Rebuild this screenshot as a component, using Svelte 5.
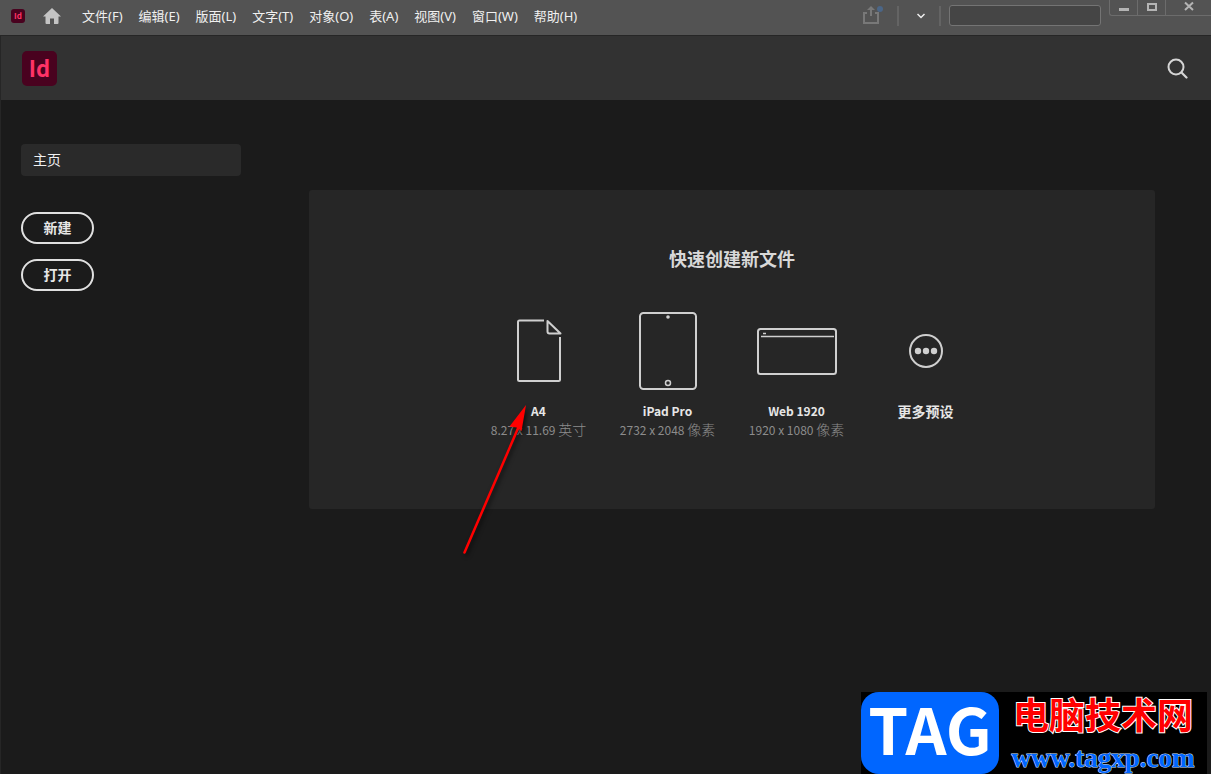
<script lang="ts">
    const menus = [
        "文件(F)",
        "编辑(E)",
        "版面(L)",
        "文字(T)",
        "对象(O)",
        "表(A)",
        "视图(V)",
        "窗口(W)",
        "帮助(H)",
    ];

    const presets = [
        { icon: "page", name: "A4", size: "8.27 x 11.69", unit: "英寸" },
        { icon: "tablet", name: "iPad Pro", size: "2732 x 2048", unit: "像素" },
        { icon: "browser", name: "Web 1920", size: "1920 x 1080", unit: "像素" },
        { icon: "more", name: "更多预设", size: "", unit: "" },
    ];

    let query = $state("");
</script>

<div class="app">
    <div class="menubar">
        <span class="badge">Id</span>
        <button class="home" aria-label="主页">
            <svg width="18" height="16" viewBox="0 0 18 16">
                <path d="M9 0 L18 8.6 H15.5 V15 Q15.5 16 14.5 16 H11 V10.5 H7 V16 H3.5 Q2.5 16 2.5 15 V8.6 H0 Z" fill="#c4c4c4" />
            </svg>
        </button>
        <nav class="menus">
            {#each menus as menu}
                <button>{menu}</button>
            {/each}
        </nav>
        <div class="tools">
            <button class="share" aria-label="共享">
                <svg width="22" height="20" viewBox="0 0 22 20">
                    <path d="M5 7 H2 V17 H16 V7 H13" fill="none" stroke="#787878" stroke-width="2" />
                    <path d="M9 10 V3" stroke="#787878" stroke-width="2" />
                    <path d="M9 0 L13 4 H5 Z" fill="#787878" />
                    <circle cx="18" cy="3" r="3" fill="#4b6687" />
                </svg>
            </button>
            <button class="chevron" aria-label="工作区">
                <svg width="8" height="6" viewBox="0 0 8 6">
                    <path d="M0.5 1 L4 4.5 L7.5 1" fill="none" stroke="#f0f0f0" stroke-width="1.5" />
                </svg>
            </button>
            <input type="text" aria-label="搜索帮助" bind:value={query} />
            <div class="window">
                <button aria-label="最小化">
                    <svg width="10" height="12" viewBox="0 0 10 12"><path d="M0 8 H10 V11 H0 Z" fill="#b4b4b4" /></svg>
                </button>
                <button aria-label="最大化">
                    <svg width="10" height="12" viewBox="0 0 10 12"><path d="M1 4 H9 V10 H1 Z" fill="none" stroke="#b4b4b4" stroke-width="2" /></svg>
                </button>
                <button class="close" aria-label="关闭">
                    <svg width="10" height="12" viewBox="0 0 10 12"><path d="M1 2.5 L9 10 M9 2.5 L1 10" stroke="#b4b4b4" stroke-width="2" /></svg>
                </button>
            </div>
        </div>
    </div>

    <header>
        <span class="logo">Id</span>
        <button aria-label="搜索">
            <svg width="22" height="22" viewBox="0 0 22 22">
                <circle cx="9" cy="10" r="7.5" fill="none" stroke="#d5d5d5" stroke-width="2" />
                <path d="M14.5 15.5 L19.5 20.5" stroke="#d5d5d5" stroke-width="2.2" stroke-linecap="round" />
            </svg>
        </button>
    </header>

    <div class="body">
        <aside>
            <a href="#home">主页</a>
            <button>新建</button>
            <button>打开</button>
        </aside>

        <main>
            <h1>快速创建新文件</h1>
            <div class="presets">
                {#each presets as preset}
                    <button class="preset">
                        <span class="icon">
                            {#if preset.icon === "page"}
                                <svg width="46" height="64" viewBox="0 0 46 64">
                                    <path d="M28 1.5 H3.5 Q2 1.5 2 3 V60.5 Q2 62 3.5 62 H42.5 Q44 62 44 60.5 V18" />
                                    <path d="M31.5 2 V12.5 Q31.500 14.5 33.5 14.5 H44.5 Z" stroke-linejoin="round" />
                                </svg>
                            {:else if preset.icon === "tablet"}
                                <svg width="58" height="80" viewBox="0 0 58 80">
                                    <rect x="1" y="2" width="56" height="76" rx="3.5" />
                                    <circle class="dot" cx="29" cy="6" r="1.8" />
                                    <circle cx="29" cy="72" r="2.5" stroke-width="1.5" />
                                </svg>
                            {:else if preset.icon === "browser"}
                                <svg width="80" height="48" viewBox="0 0 80 48">
                                    <rect x="1" y="2" width="78" height="45" rx="2.5" />
                                    <path class="thin" d="M4 9.5 H77 M6 6.5 H9" />
                                </svg>
                            {:else}
                                <svg width="34" height="34" viewBox="0 0 34 34">
                                    <circle cx="17" cy="17" r="16" />
                                    <circle class="dot" cx="9" cy="17" r="3.2" />
                                    <circle class="dot" cx="17" cy="17" r="3.2" />
                                    <circle class="dot" cx="25" cy="17" r="3.2" />
                                </svg>
                            {/if}
                        </span>
                        <span class="name" class:large={preset.icon === "more"}>{preset.name}</span>
                        {#if preset.size}
                            <span class="size">{preset.size} <span class="unit">{preset.unit}</span></span>
                        {/if}
                    </button>
                {/each}
                <svg class="arrow" width="80" height="160" viewBox="0 0 80 160">
                    <path d="M6.5 148.5 L61 22" stroke="#ff0000" stroke-width="2.5" stroke-linecap="round" />
                    <path d="M68 1 L51.5 22.5 L58.5 23.5 L63.5 27 Z" fill="#ff0000" />
                </svg>
            </div>
        </main>
    </div>

    <div class="watermark">
        <span class="tag">TAG</span>
        <div class="site">
            <strong>电脑技术网</strong>
            <span>www.tagxp.com</span>
        </div>
    </div>
</div>

<style>
    :global(body) {
        background: #1b1b1b;
    }

    .app {
        display: flex;
        flex-direction: column;
        position: relative;
        box-sizing: border-box;
        min-height: 100vh;
        background: #1b1b1b;
        color: #e6e6e6;
        font-family: "Noto Sans CJK SC", "Open Sans", sans-serif;
        font-size: 14px;
    }

    button {
        display: flex;
        align-items: center;
        justify-content: center;
        padding: 0;
        border: 0;
        background: none;
        color: inherit;
        font: inherit;
        cursor: pointer;
    }

    .menubar {
        display: flex;
        align-items: flex-start;
        height: 35px;
        border-bottom: 1px solid #262626;
        background: #535353;
    }

    .badge {
        margin: 9px 18px 0 11px;
        width: 14px;
        border-radius: 3px;
        background: #49021f;
        color: #ff3366;
        font-size: 8px;
        font-weight: 700;
        line-height: 14px;
        text-align: center;
    }

    .home {
        height: 32px;
    }

    .menus {
        display: flex;
        gap: 16px;
        margin-left: 21px;
        color: #f0f0f0;
        font-family: "Noto Sans", "Noto Sans CJK SC", sans-serif;
        font-size: 13px;
    }

    .menus button {
        height: 30px;
        white-space: nowrap;
    }

    .tools {
        display: flex;
        align-items: flex-start;
        margin-left: auto;
    }

    .share {
        margin: 6px 13px 0 0;
    }

    .chevron {
        box-sizing: border-box;
        width: 44px;
        height: 20px;
        margin-top: 6px;
        padding-left: 4px;
        border: solid #646464;
        border-width: 0 2px;
    }

    input {
        box-sizing: border-box;
        margin: 5px 8px 0;
        width: 152px;
        height: 21px;
        border: 1px solid #747474;
        border-radius: 3px;
        background: #454545;
        color: #f0f0f0;
        font-size: 12px;
    }

    .window {
        display: flex;
        border: solid #6c6c6c;
        border-width: 0 0 1px 1px;
        border-bottom-left-radius: 3px;
    }

    .window button {
        align-items: flex-start;
        box-sizing: border-box;
        width: 28px;
        height: 15px;
        border-right: 1px solid #6c6c6c;
    }

    .window .close {
        width: 45px;
        border-right: 0;
    }

    header {
        display: flex;
        align-items: center;
        justify-content: space-between;
        height: 64px;
        padding: 0 22px 0 21px;
        border-left: 1px solid #262626;
        background: #323232;
    }

    .logo {
        width: 35px;
        padding-bottom: 3px;
        border-radius: 5px;
        background: #49021f;
        color: #ff3366;
        font-size: 22px;
        font-weight: 700;
        line-height: 32px;
        text-align: center;
    }

    .body {
        display: flex;
        flex: 1;
        align-items: flex-start;
        gap: 68px;
        padding: 44px 56px 44px 20px;
        border-left: 1px solid #262626;
    }

    aside {
        display: flex;
        flex-direction: column;
        align-items: flex-start;
        gap: 15px;
        flex: 0 0 220px;
    }

    aside a {
        box-sizing: border-box;
        width: 100%;
        margin-bottom: 21px;
        padding: 0 12px 2px;
        border-radius: 4px;
        background: #2a2a2a;
        color: #f0f0f0;
        line-height: 30px;
        text-decoration: none;
    }

    aside button {
        box-sizing: border-box;
        width: 73px;
        height: 32px;
        padding-bottom: 2px;
        border: 2px solid #e0e0e0;
        border-radius: 16px;
        font-weight: 700;
    }

    main {
        flex: 1;
        margin-top: 46px;
        padding: 54px 0 70px;
        border-radius: 3px;
        background: #262626;
    }

    h1 {
        margin: 0 0 39px;
        color: #d8d8d8;
        font-size: 18px;
        font-weight: 700;
        line-height: 28px;
        text-align: center;
    }

    .presets {
        display: flex;
        position: relative;
        width: 516px;
        margin: 0 auto;
    }

    .preset {
        flex: 1;
        flex-direction: column;
        justify-content: flex-start;
    }

    .icon {
        display: flex;
        align-items: center;
        height: 80px;
        margin-bottom: 11px;
    }

    .icon svg {
        fill: none;
        stroke: #cfcfcf;
        stroke-width: 2;
    }

    .icon .dot {
        fill: #cfcfcf;
        stroke: none;
    }

    .icon .thin {
        stroke-width: 1.5;
    }

    .name {
        font-size: 12px;
        font-weight: 700;
        line-height: 18px;
    }

    .large {
        font-size: 14px;
    }

    .size {
        color: #8c8c8c;
        font-size: 12px;
        line-height: 19px;
        white-space: nowrap;
    }

    .unit {
        font-size: 14px;
        font-weight: 300;
    }

    .arrow {
        position: absolute;
        top: 93px;
        left: -16px;
        filter: drop-shadow(2px 2px 2px rgb(0 0 0 / 60%));
        pointer-events: none;
    }

    .watermark {
        display: flex;
        position: absolute;
        right: 4px;
        bottom: 0;
        width: 346px;
        background: #000;
    }

    .tag {
        width: 138px;
        padding-bottom: 12px;
        border-radius: 18px;
        background: #0066ff;
        color: #fff;
        font-size: 64px;
        font-weight: 700;
        line-height: 70px;
        text-align: center;
    }

    .site {
        display: flex;
        flex: 1;
        flex-direction: column;
        align-items: center;
        gap: 8px;
        white-space: nowrap;
    }

    .site strong {
        color: #ff0000;
        font-size: 36px;
        font-weight: 700;
        line-height: 42px;
        -webkit-text-stroke: 2px #fff;
        paint-order: stroke fill;
    }

    .site span {
        color: #0066ff;
        font-family: "Liberation Serif", serif;
        font-size: 27px;
        font-weight: 700;
        line-height: 32px;
        -webkit-text-stroke: 1px #cfe2ff;
        paint-order: stroke fill;
    }
</style>
